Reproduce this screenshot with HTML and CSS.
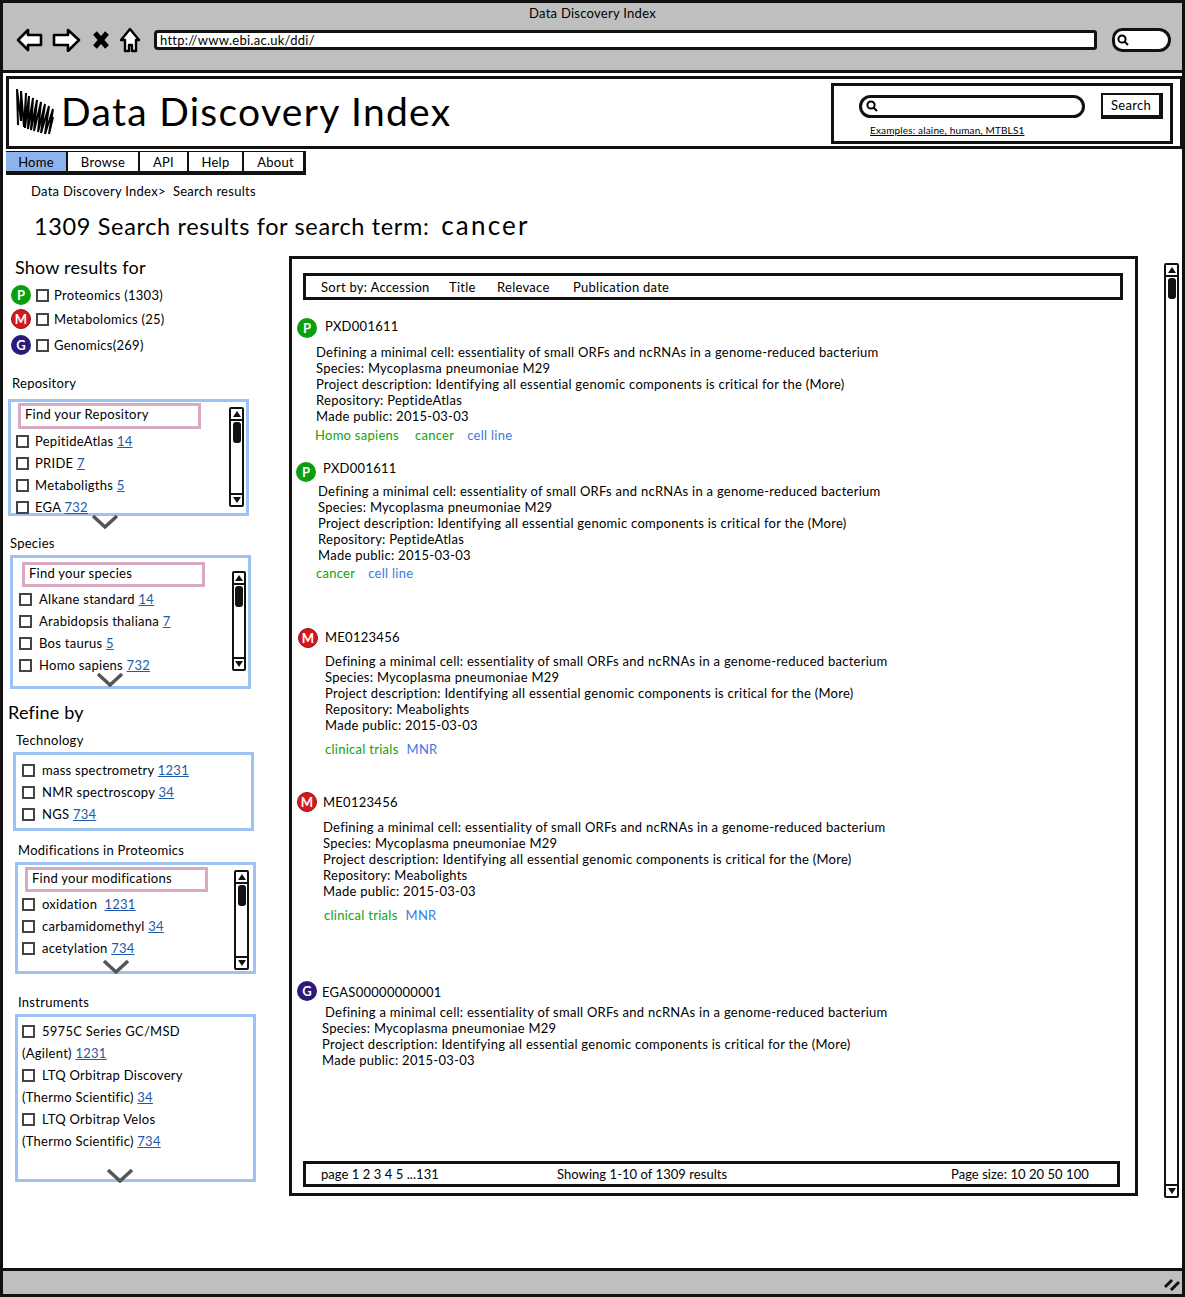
FILE: index.html
```html
<!DOCTYPE html>
<html lang="en">
<head>
    <meta charset="UTF-8">
    <meta name="viewport" content="width=device-width, initial-scale=1.0">
    <title>Data Discovery Index</title>
    <link rel="stylesheet" href="styles.css">
</head>
<body>
<div class="window">
    <!-- browser chrome -->
    <div class="chrome">
        <div class="chrome-title">Data Discovery Index</div>
        <div class="toolbar">
            <svg class="tool tool-back" viewBox="0 0 27 24"><path d="M12 2 L2 12 L12 22 L12 17 L25 17 L25 7 L12 7 Z"/></svg>
            <svg class="tool tool-forward" viewBox="0 0 29 24"><path d="M16 2 L27 12 L16 23 L16 17 L2 17 L2 7 L16 7 Z"/></svg>
            <svg class="tool tool-stop" viewBox="0 0 16 18"><path d="M2 2 L14 16 M14 2 L2 16"/></svg>
            <svg class="tool tool-home" viewBox="0 0 22 26"><path d="M11 2 L2 13 L6 13 L6 24 L10 24 L10 18 L13 18 L13 24 L17 24 L17 13 L20 13 Z"/></svg>
            <div class="url-bar">http://www.ebi.ac.uk/ddi/</div>
            <div class="pill pill-chrome">
                <svg class="lens" viewBox="0 0 12 12"><circle cx="5" cy="5" r="3.6"/><path d="M7.5 7.5 L11 11"/></svg>
            </div>
        </div>
    </div>

    <!-- site header -->
    <header class="site-header">
        <svg class="logo" viewBox="0 0 38 48">
            <path d="M2 38 L1 2 L5 34 L5 4 L8 40 L10 6 L9 41 L13 9 L12 42 L17 11 L15 43 L21 13 L18 44 L25 15 L22 45 L29 17 L25 46 L33 19 L29 47 L37 22 L33 47 L37 30"/>
        </svg>
        <h1 class="site-title">Data Discovery Index</h1>
        <div class="site-search">
            <div class="site-search-row">
                <div class="pill pill-search">
                    <svg class="lens" viewBox="0 0 12 12"><circle cx="5" cy="5" r="3.6"/><path d="M7.5 7.5 L11 11"/></svg>
                </div>
                <button class="search-button">Search</button>
            </div>
            <a class="examples">Examples: alaine, human, MTBLS1</a>
        </div>
    </header>

    <nav class="nav">
        <a class="nav-item nav-home">Home</a>
        <a class="nav-item nav-browse">Browse</a>
        <a class="nav-item nav-api">API</a>
        <a class="nav-item nav-help">Help</a>
        <a class="nav-item nav-about">About</a>
    </nav>

    <div class="breadcrumb">Data Discovery Index&gt;&nbsp; Search results</div>
    <h2 class="page-title">1309 Search results for search term: <span class="term">cancer</span></h2>

    <div class="content">
        <!-- left column -->
        <aside class="sidebar">
            <h3 class="side-title side-show">Show results for</h3>
            <div class="type-row type-first"><span class="badge badge-p">P</span><span class="check"></span><span>Proteomics (1303)</span></div>
            <div class="type-row"><span class="badge badge-m">M</span><span class="check"></span><span>Metabolomics (25)</span></div>
            <div class="type-row type-last"><span class="badge badge-g">G</span><span class="check"></span><span>Genomics(269)</span></div>

            <div class="filter-label label-repo">Repository</div>
            <div class="panel panel-repo">
                <div class="panel-list">
                    <div class="find">Find your Repository</div>
                    <div class="row"><span class="check"></span>PepitideAtlas <a class="count">14</a></div>
                    <div class="row"><span class="check"></span>PRIDE <a class="count">7</a></div>
                    <div class="row"><span class="check"></span>Metaboligths <a class="count">5</a></div>
                    <div class="row"><span class="check"></span>EGA <a class="count">732</a></div>
                </div>
                <div class="scroll scroll-small">
                    <span class="scroll-btn"><i class="tri-up"></i></span>
                    <span class="scroll-track"><i class="thumb"></i></span>
                    <span class="scroll-btn"><i class="tri-down"></i></span>
                </div>
                <svg class="chevron" viewBox="0 0 28 15"><path d="M2 2 L14 13 L26 2"/></svg>
            </div>

            <div class="filter-label label-species">Species</div>
            <div class="panel panel-species">
                <div class="panel-list">
                    <div class="find">Find your species</div>
                    <div class="row"><span class="check"></span>Alkane standard <a class="count">14</a></div>
                    <div class="row"><span class="check"></span>Arabidopsis thaliana <a class="count">7</a></div>
                    <div class="row"><span class="check"></span>Bos taurus <a class="count">5</a></div>
                    <div class="row"><span class="check"></span>Homo sapiens <a class="count">732</a></div>
                </div>
                <div class="scroll scroll-small">
                    <span class="scroll-btn"><i class="tri-up"></i></span>
                    <span class="scroll-track"><i class="thumb"></i></span>
                    <span class="scroll-btn"><i class="tri-down"></i></span>
                </div>
                <svg class="chevron" viewBox="0 0 28 15"><path d="M2 2 L14 13 L26 2"/></svg>
            </div>

            <h3 class="side-title side-refine">Refine by</h3>

            <div class="filter-label label-tech">Technology</div>
            <div class="panel panel-tech">
                <div class="panel-list">
                    <div class="row"><span class="check"></span>mass spectrometry <a class="count">1231</a></div>
                    <div class="row"><span class="check"></span>NMR spectroscopy <a class="count">34</a></div>
                    <div class="row"><span class="check"></span>NGS <a class="count">734</a></div>
                </div>
            </div>

            <div class="filter-label label-mods">Modifications in Proteomics</div>
            <div class="panel panel-mods">
                <div class="panel-list">
                    <div class="find">Find your modifications</div>
                    <div class="row"><span class="check"></span>oxidation  <a class="count">1231</a></div>
                    <div class="row"><span class="check"></span>carbamidomethyl <a class="count">34</a></div>
                    <div class="row"><span class="check"></span>acetylation <a class="count">734</a></div>
                </div>
                <div class="scroll scroll-small">
                    <span class="scroll-btn"><i class="tri-up"></i></span>
                    <span class="scroll-track"><i class="thumb"></i></span>
                    <span class="scroll-btn"><i class="tri-down"></i></span>
                </div>
                <svg class="chevron" viewBox="0 0 28 15"><path d="M2 2 L14 13 L26 2"/></svg>
            </div>

            <div class="filter-label label-inst">Instruments</div>
            <div class="panel panel-inst">
                <div class="panel-list">
                    <div class="row"><span class="check"></span>5975C Series GC/MSD</div>
                    <div class="row">(Agilent) <a class="count">1231</a></div>
                    <div class="row"><span class="check"></span>LTQ Orbitrap Discovery</div>
                    <div class="row">(Thermo Scientific) <a class="count">34</a></div>
                    <div class="row"><span class="check"></span>LTQ Orbitrap Velos</div>
                    <div class="row">(Thermo Scientific) <a class="count">734</a></div>
                </div>
                <svg class="chevron" viewBox="0 0 28 15"><path d="M2 2 L14 13 L26 2"/></svg>
            </div>
        </aside>

        <!-- results -->
        <main class="results">
            <div class="bar sort-bar">
                <span class="sort-accession">Sort by: Accession</span>
                <span class="sort-title">Title</span>
                <span class="sort-relevance">Relevace</span>
                <span>Publication date</span>
            </div>

            <section class="result result-1">
                <div class="result-head"><span class="badge badge-p">P</span><span class="result-id">PXD001611</span></div>
                <div class="result-body">
                    <div>Defining a minimal cell: essentiality of small ORFs and ncRNAs in a genome-reduced bacterium</div>
                    <div>Species: Mycoplasma pneumoniae M29</div>
                    <div>Project description: Identifying all essential genomic components is critical for the (More)</div>
                    <div>Repository: PeptideAtlas</div>
                    <div>Made public: 2015-03-03</div>
                </div>
                <div class="tags"><span class="tag-green tag-homo">Homo sapiens</span><span class="tag-green tag-cancer">cancer</span><span class="tag-blue">cell line</span></div>
            </section>

            <section class="result result-2">
                <div class="result-head"><span class="badge badge-p">P</span><span class="result-id">PXD001611</span></div>
                <div class="result-body">
                    <div>Defining a minimal cell: essentiality of small ORFs and ncRNAs in a genome-reduced bacterium</div>
                    <div>Species: Mycoplasma pneumoniae M29</div>
                    <div>Project description: Identifying all essential genomic components is critical for the (More)</div>
                    <div>Repository: PeptideAtlas</div>
                    <div>Made public: 2015-03-03</div>
                </div>
                <div class="tags"><span class="tag-green tag-cancer-only">cancer</span><span class="tag-blue">cell line</span></div>
            </section>

            <section class="result result-3">
                <div class="result-head"><span class="badge badge-m">M</span><span class="result-id">ME0123456</span></div>
                <div class="result-body">
                    <div>Defining a minimal cell: essentiality of small ORFs and ncRNAs in a genome-reduced bacterium</div>
                    <div>Species: Mycoplasma pneumoniae M29</div>
                    <div>Project description: Identifying all essential genomic components is critical for the (More)</div>
                    <div>Repository: Meabolights</div>
                    <div>Made public: 2015-03-03</div>
                </div>
                <div class="tags"><span class="tag-green tag-trials">clinical trials</span><span class="tag-blue">MNR</span></div>
            </section>

            <section class="result result-4">
                <div class="result-head"><span class="badge badge-m">M</span><span class="result-id">ME0123456</span></div>
                <div class="result-body">
                    <div>Defining a minimal cell: essentiality of small ORFs and ncRNAs in a genome-reduced bacterium</div>
                    <div>Species: Mycoplasma pneumoniae M29</div>
                    <div>Project description: Identifying all essential genomic components is critical for the (More)</div>
                    <div>Repository: Meabolights</div>
                    <div>Made public: 2015-03-03</div>
                </div>
                <div class="tags"><span class="tag-green tag-trials">clinical trials</span><span class="tag-blue">MNR</span></div>
            </section>

            <section class="result result-5">
                <div class="result-head"><span class="badge badge-g">G</span><span class="result-id">EGAS00000000001</span></div>
                <div class="result-body">
                    <div class="first-line">Defining a minimal cell: essentiality of small ORFs and ncRNAs in a genome-reduced bacterium</div>
                    <div>Species: Mycoplasma pneumoniae M29</div>
                    <div>Project description: Identifying all essential genomic components is critical for the (More)</div>
                    <div>Made public: 2015-03-03</div>
                </div>
            </section>

            <div class="bar pager-bar">
                <span class="pager-pages">page 1 2 3 4 5 ...131</span>
                <span class="pager-showing">Showing 1-10 of 1309 results</span>
                <span>Page size: 10 20 50 100</span>
            </div>
        </main>

        <div class="scroll scroll-page">
            <span class="scroll-btn"><i class="tri-up"></i></span>
            <span class="scroll-track"><i class="thumb"></i></span>
            <span class="scroll-btn"><i class="tri-down"></i></span>
        </div>
    </div>

    <div class="status">
        <svg class="grip" viewBox="0 0 16 13"><path d="M1 9 L8 2 M7 12 L15 4"/></svg>
    </div>
</div>
</body>
</html>
```

FILE: styles.css
```css
body {
    margin: 0;
    background: #fff;
    color: #000;
    font-family: "Lato", "Open Sans", sans-serif;
    font-size: 13px;
    letter-spacing: 0.27px;
}

h1, h2, h3 {
    margin: 0;
    font-weight: 400;
}

a {
    color: inherit;
}

.window {
    display: flex;
    flex-direction: column;
    box-sizing: border-box;
    width: 1185px;
    height: 1297px;
    overflow: hidden;
    border: 3px solid #111;
}

/* browser chrome */
.chrome {
    box-sizing: border-box;
    flex: none;
    height: 70px;
    padding-top: 2px;
    background: #bfbfbf;
    border-bottom: 3px solid #111;
}

.chrome-title {
    line-height: 16px;
    text-align: center;
}

.toolbar {
    display: flex;
    align-items: center;
    height: 30px;
    margin-top: 4px;
    padding-left: 13px;
}

.tool {
    flex: none;
    fill: #fff;
    stroke: #000;
    stroke-width: 2.6;
    stroke-linejoin: round;
}

.tool-back {
    width: 27px;
    height: 24px;
}

.tool-forward {
    width: 29px;
    height: 24px;
    margin-left: 9px;
}

.tool-stop {
    width: 16px;
    height: 18px;
    margin-left: 12px;
    stroke-width: 5;
}

.tool-home {
    width: 22px;
    height: 26px;
    margin-left: 10px;
    stroke-width: 2.4;
}

.url-bar {
    box-sizing: border-box;
    flex: none;
    width: 943px;
    height: 20px;
    margin-left: 13px;
    padding-left: 3px;
    line-height: 15px;
    background: #fff;
    border: 3px solid #111;
    border-radius: 4px 3px 3px 4px;
}

.pill {
    box-sizing: border-box;
    display: flex;
    align-items: center;
    flex: none;
    background: #fff;
    border: 3px solid #111;
    border-radius: 14px;
}

.pill-chrome {
    width: 59px;
    height: 24px;
    margin-left: 15px;
    padding-left: 2px;
    border-radius: 12px 14px 14px 12px;
}

.pill-search {
    width: 226px;
    height: 23px;
    padding-left: 4px;
}

.lens {
    width: 12px;
    height: 12px;
    fill: none;
    stroke: #000;
    stroke-width: 2;
}

/* site header */
.site-header {
    box-sizing: border-box;
    display: flex;
    flex: none;
    align-items: flex-start;
    height: 73px;
    margin: 3px 0 0 3px;
    border: 3px solid #111;
    border-right-width: 2px;
}

.logo {
    flex: none;
    width: 38px;
    height: 48px;
    margin: 8px 0 0 7px;
    fill: none;
    stroke: #000;
    stroke-width: 2;
}

.site-title {
    margin: 7px 0 0 7px;
    line-height: 50px;
    font-size: 39px;
    letter-spacing: 1.3px;
    white-space: nowrap;
}

.site-search {
    box-sizing: border-box;
    flex: none;
    width: 342px;
    height: 61px;
    margin: 4px 7px 0 auto;
    padding: 7px 0 0 25px;
    border: 3px solid #111;
}

.site-search-row {
    display: flex;
    align-items: center;
    height: 26px;
}

.search-button {
    box-sizing: border-box;
    width: 62px;
    height: 26px;
    margin-left: 16px;
    padding: 0;
    font: inherit;
    letter-spacing: inherit;
    color: inherit;
    background: #fff;
    border: 2px solid #111;
    border-right-width: 4px;
    border-bottom-width: 4px;
}

.examples {
    display: block;
    margin: 5px 0 0 11px;
    line-height: 12px;
    font-size: 10px;
    letter-spacing: 0.15px;
    text-decoration: underline;
}

/* nav */
.nav {
    box-sizing: border-box;
    display: flex;
    flex: none;
    width: 300px;
    height: 24px;
    margin: 2px 0 0 3px;
    border-top: 1px solid #111;
    border-bottom: 4px solid #111;
    border-right: 3px solid #111;
}

.nav-item {
    box-sizing: border-box;
    line-height: 20px;
    text-align: center;
    border-right: 2px solid #111;
}

.nav-home {
    width: 62px;
    background: #8db4ea;
}

.nav-browse {
    width: 72px;
}

.nav-api {
    width: 49px;
}

.nav-help {
    width: 55px;
}

.nav-about {
    flex: 1;
    padding-left: 4px;
    border-right: 0;
}

.breadcrumb {
    flex: none;
    margin: 8px 0 0 28px;
    line-height: 16px;
}

.page-title {
    flex: none;
    margin: 11px 0 0 31px;
    line-height: 30px;
    font-size: 23.5px;
    letter-spacing: 0.65px;
}

.term {
    margin-left: 5px;
    font-size: 26px;
    letter-spacing: 2.2px;
}

.content {
    display: flex;
    flex: none;
    align-items: flex-start;
    margin-top: 15px;
}

/* sidebar */
.sidebar {
    flex: none;
    width: 286px;
}

.side-title {
    line-height: 22px;
    font-size: 18px;
    letter-spacing: 0.2px;
}

.side-show {
    margin-left: 12px;
}

.side-refine {
    margin: 11px 0 0 5px;
    line-height: 24px;
}

.type-row {
    display: flex;
    align-items: center;
    height: 24px;
    margin-left: 8px;
}

.type-first {
    margin-top: 5px;
}

.type-last {
    margin-top: 2px;
}

.type-row .check {
    margin: 0 5px;
}

.badge {
    box-sizing: border-box;
    display: flex;
    flex: none;
    align-items: center;
    justify-content: center;
    width: 20px;
    height: 20px;
    font-size: 13px;
    font-weight: 700;
    letter-spacing: 0;
    color: #fff;
    border-radius: 50%;
}

.badge-p {
    background: #0a9f0f;
}

.badge-m {
    background: #d8171c;
    border: 1px solid #8b1518;
}

.badge-g {
    background: #2c1a78;
}

.check {
    box-sizing: border-box;
    display: inline-block;
    flex: none;
    width: 13px;
    height: 13px;
    background: #fff;
    border: 2px solid #444;
}

.filter-label {
    line-height: 16px;
}

.label-repo {
    margin: 18px 0 8px 9px;
}

.label-species {
    margin: 19px 0 4px 7px;
}

.label-tech {
    margin: 8px 0 4px 13px;
}

.label-mods {
    margin: 11px 0 4px 15px;
}

.label-inst {
    margin: 20px 0 4px 15px;
}

.panel {
    box-sizing: border-box;
    position: relative;
    display: flex;
    align-items: flex-start;
    width: 241px;
    border: 3px solid #9dc3f3;
}

.panel-repo {
    height: 117px;
    margin-left: 5px;
}

.panel-species {
    height: 134px;
    margin-left: 7px;
}

.panel-tech {
    height: 79px;
    margin-left: 10px;
    padding-top: 4px;
}

.panel-mods {
    height: 112px;
    margin-left: 12px;
}

.panel-inst {
    height: 168px;
    margin-left: 12px;
    padding-top: 3px;
}

.panel-list {
    flex: 1;
}

.find {
    box-sizing: border-box;
    width: 183px;
    height: 25px;
    padding-left: 4px;
    line-height: 17px;
    border: 3px solid #d9a9c4;
}

.panel-repo .find {
    height: 26px;
    margin: 1px 0 1px 7px;
}

.panel-species .find {
    margin: 4px 0 1px 9px;
}

.panel-mods .find {
    margin: 2px 0 1px 7px;
    line-height: 16px;
}

.row {
    display: flex;
    align-items: center;
    height: 22px;
    padding-left: 5px;
    white-space: pre;
}

.row .check {
    margin-right: 7px;
}

.panel-repo .row .check {
    margin-right: 6px;
}

.panel-species .row {
    padding-left: 6px;
}

.panel-tech .row {
    padding-left: 6px;
}

.panel-mods .row {
    padding-left: 4px;
}

.panel-inst .row {
    padding-left: 4px;
}

.count {
    color: #1f5aa6;
    text-decoration: underline;
}

/* scrollbars */
.scroll {
    box-sizing: border-box;
    display: flex;
    flex: none;
    flex-direction: column;
    width: 15px;
    background: #fff;
    border: 2px solid #111;
    border-radius: 2px;
}

.scroll-small {
    height: 100px;
}

.panel-repo .scroll {
    margin: 5px 2px 0 0;
}

.panel-species .scroll {
    width: 14px;
    margin: 13px 2px 0 0;
}

.panel-mods .scroll {
    margin: 5px 4px 0 0;
}

.scroll-page {
    height: 935px;
    margin: 7px 0 0 26px;
}

.scroll-btn {
    display: flex;
    flex: none;
    align-items: center;
    justify-content: center;
    height: 10px;
}

.scroll-track {
    flex: 1;
    padding-top: 1px;
    border-top: 2px solid #111;
    border-bottom: 2px solid #111;
}

.thumb {
    display: block;
    width: 8px;
    height: 21px;
    margin: 0 auto;
    background: #111;
    border-radius: 3px;
}

.tri-up,
.tri-down {
    display: block;
    width: 0;
    height: 0;
    border-left: 4px solid transparent;
    border-right: 4px solid transparent;
}

.tri-up {
    border-bottom: 6px solid #111;
}

.tri-down {
    border-top: 6px solid #111;
}

/* the chevrons sit over the panel's bottom edge */
.chevron {
    position: absolute;
    width: 28px;
    height: 15px;
    fill: none;
    stroke: #555;
    stroke-width: 3.5;
}

.panel-repo .chevron {
    left: 80px;
    bottom: -16px;
}

.panel-species .chevron {
    left: 83px;
    bottom: -1px;
}

.panel-mods .chevron {
    left: 84px;
    bottom: -3px;
}

.panel-inst .chevron {
    left: 88px;
    bottom: -4px;
}

/* results */
.results {
    box-sizing: border-box;
    display: flex;
    flex: none;
    flex-direction: column;
    width: 849px;
    height: 940px;
    border: 3px solid #111;
}

.bar {
    box-sizing: border-box;
    display: flex;
    align-items: center;
    flex: none;
    padding-left: 15px;
    border: 3px solid #111;
}

.sort-bar {
    width: 820px;
    height: 27px;
    margin: 14px 0 0 11px;
}

.sort-accession {
    width: 128px;
}

.sort-title {
    width: 48px;
}

.sort-relevance {
    width: 76px;
}

.pager-bar {
    width: 817px;
    height: 26px;
    margin: auto 0 6px 11px;
    letter-spacing: 0.05px;
}

.pager-pages {
    width: 236px;
}

.pager-showing {
    width: 394px;
}

.result-head {
    display: flex;
    align-items: center;
    height: 20px;
}

.result-id {
    line-height: 16px;
}

.result-body {
    line-height: 16px;
    white-space: nowrap;
}

.tags {
    line-height: 16px;
}

.tag-green {
    color: #12a012;
}

.tag-blue {
    color: #3a78e6;
}

.tag-homo {
    margin-right: 16px;
}

.tag-cancer {
    margin-right: 13px;
}

.tag-cancer-only {
    margin-right: 13px;
}

.tag-trials {
    margin-right: 8px;
}

.result-1 {
    margin: 18px 0 0 5px;
}

.result-1 .result-id {
    margin: -4px 0 0 8px;
}

.result-1 .result-body {
    margin: 6px 0 0 19px;
}

.result-1 .tags {
    margin: 3px 0 0 18px;
}

.result-2 {
    margin: 19px 0 0 4px;
}

.result-2 .result-id {
    margin: -8px 0 0 7px;
}

.result-2 .result-body {
    margin: 1px 0 0 22px;
}

.result-2 .tags {
    margin: 2px 0 0 20px;
}

.result-3 {
    margin: 47px 0 0 6px;
}

.result-3 .result-id {
    margin: -2px 0 0 7px;
}

.result-3 .result-body {
    margin: 5px 0 0 27px;
}

.result-3 .tags {
    margin: 8px 0 0 27px;
}

.result-4 {
    margin: 35px 0 0 5px;
}

.result-4 .result-id {
    margin-left: 6px;
}

.result-4 .result-body {
    margin: 7px 0 0 26px;
}

.result-4 .tags {
    margin: 8px 0 0 27px;
}

.result-5 {
    margin: 58px 0 0 5px;
}

.result-5 .result-id {
    margin: 1px 0 0 5px;
}

.result-5 .result-body {
    margin: 3px 0 0 25px;
}

.first-line {
    padding-left: 3px;
}

/* status bar */
.status {
    box-sizing: border-box;
    display: flex;
    flex: none;
    align-items: center;
    justify-content: flex-end;
    height: 26px;
    margin-top: auto;
    padding-right: 2px;
    background: #bfbfbf;
    border-top: 3px solid #111;
}

.grip {
    width: 16px;
    height: 13px;
    margin-top: 3px;
    fill: none;
    stroke: #111;
    stroke-width: 3;
}
```
